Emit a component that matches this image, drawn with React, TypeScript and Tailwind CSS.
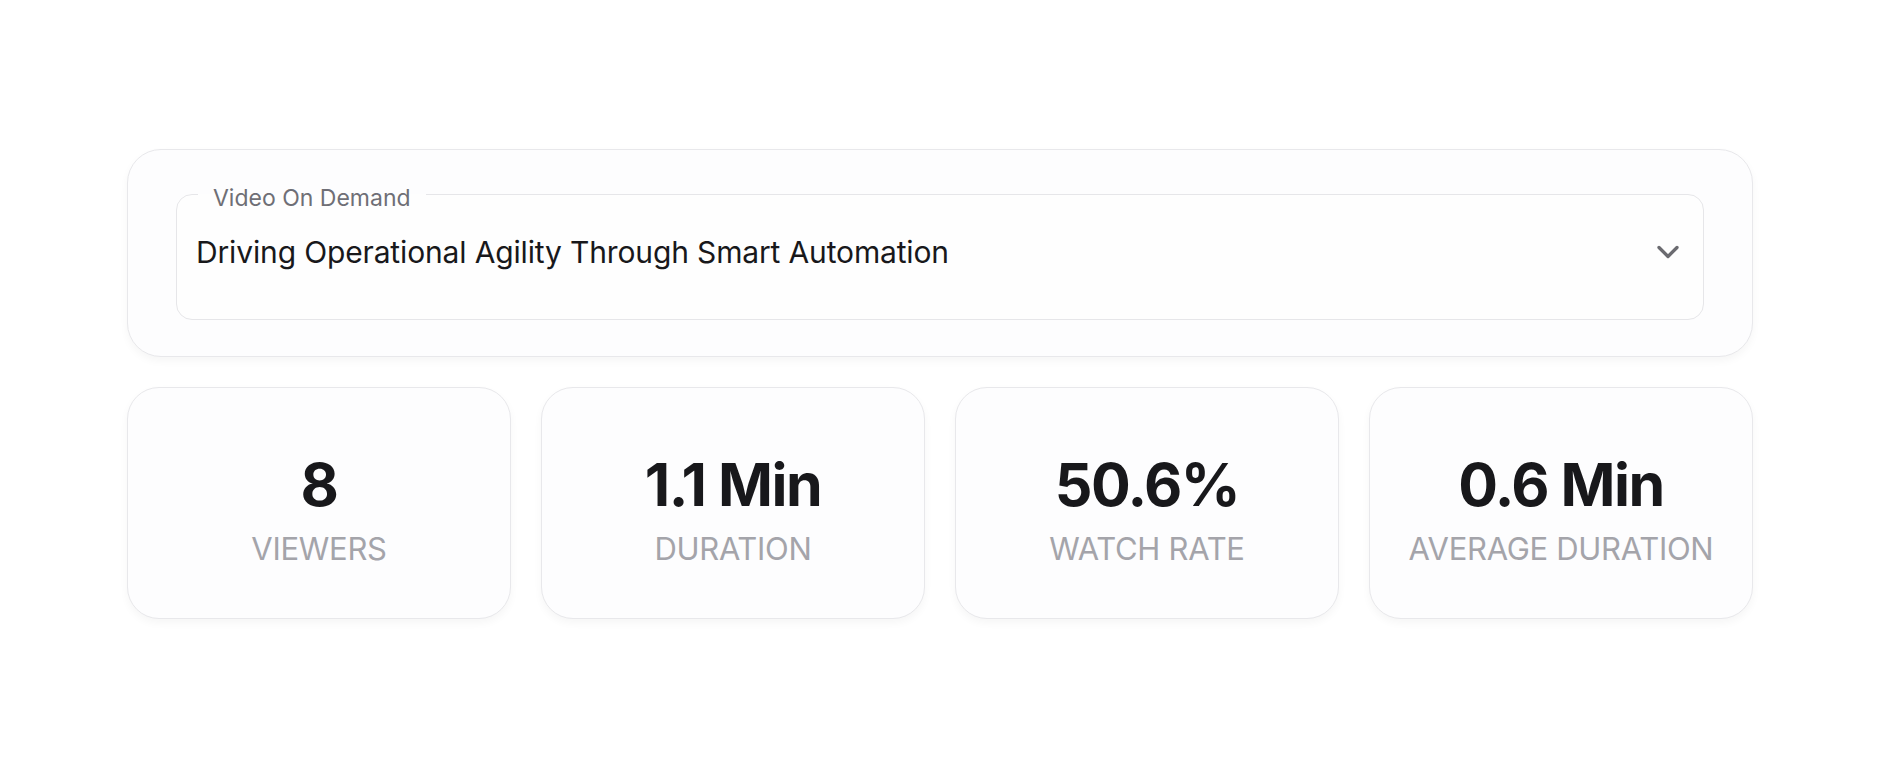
import { ChevronDown } from "lucide-react";

const stats = [
  { value: "8", label: "VIEWERS" },
  { value: "1.1 Min", label: "DURATION" },
  { value: "50.6%", label: "WATCH RATE" },
  { value: "0.6 Min", label: "AVERAGE DURATION" },
];

export default function App() {
  return (
    <div
      className="min-h-screen bg-white pt-[149px]"
      style={{ fontFamily: "Inter, 'Noto Sans', sans-serif" }}
    >
      <div className="mx-auto flex w-[1626px] flex-col gap-[30px]">
        {/* video selector */}
        <div className="h-[208px] rounded-[34px] border border-[#e8e8eb] bg-[#fdfdfe] px-[48px] pt-[32px] shadow-[0_4px_8px_rgba(0,0,0,0.04)]">
          <fieldset className="relative h-[138px] rounded-[16px] border border-[#e6e6e9] bg-[#fefefe] px-[19px]">
            <legend className="ml-[2px] px-[15px] text-[23px] leading-[24px] text-[#6f6f76]">
              <span className="relative top-[4px]">Video On Demand</span>
            </legend>
            <div className="flex h-[108px] items-center justify-between pb-[16px]">
              <span className="text-[30px] tracking-[-0.15px] text-[#18181b]">
                Driving Operational Agility Through Smart Automation
              </span>
              <ChevronDown
                className="-mr-[2px] h-[36px] w-[36px] text-[#6b6b70]"
                strokeWidth={2.2}
              />
            </div>
          </fieldset>
        </div>

        {/* stat cards */}
        <div className="grid grid-cols-4 gap-[30px]">
          {stats.map((s) => (
            <div
              key={s.label}
              className="flex h-[232px] flex-col items-center justify-center rounded-[32px] border border-[#e8e8eb] bg-[#fdfdfe] pt-[13px] shadow-[0_4px_8px_rgba(0,0,0,0.04)]"
            >
              <div className="text-[59px] font-bold leading-[64px] tracking-[-1.5px] text-[#18181b]">
                {s.value}
              </div>
              <div className="mt-[14px] text-[31px] leading-[36px] tracking-[-0.3px] text-[#a4a4aa]">
                {s.label}
              </div>
            </div>
          ))}
        </div>
      </div>
    </div>
  );
}
